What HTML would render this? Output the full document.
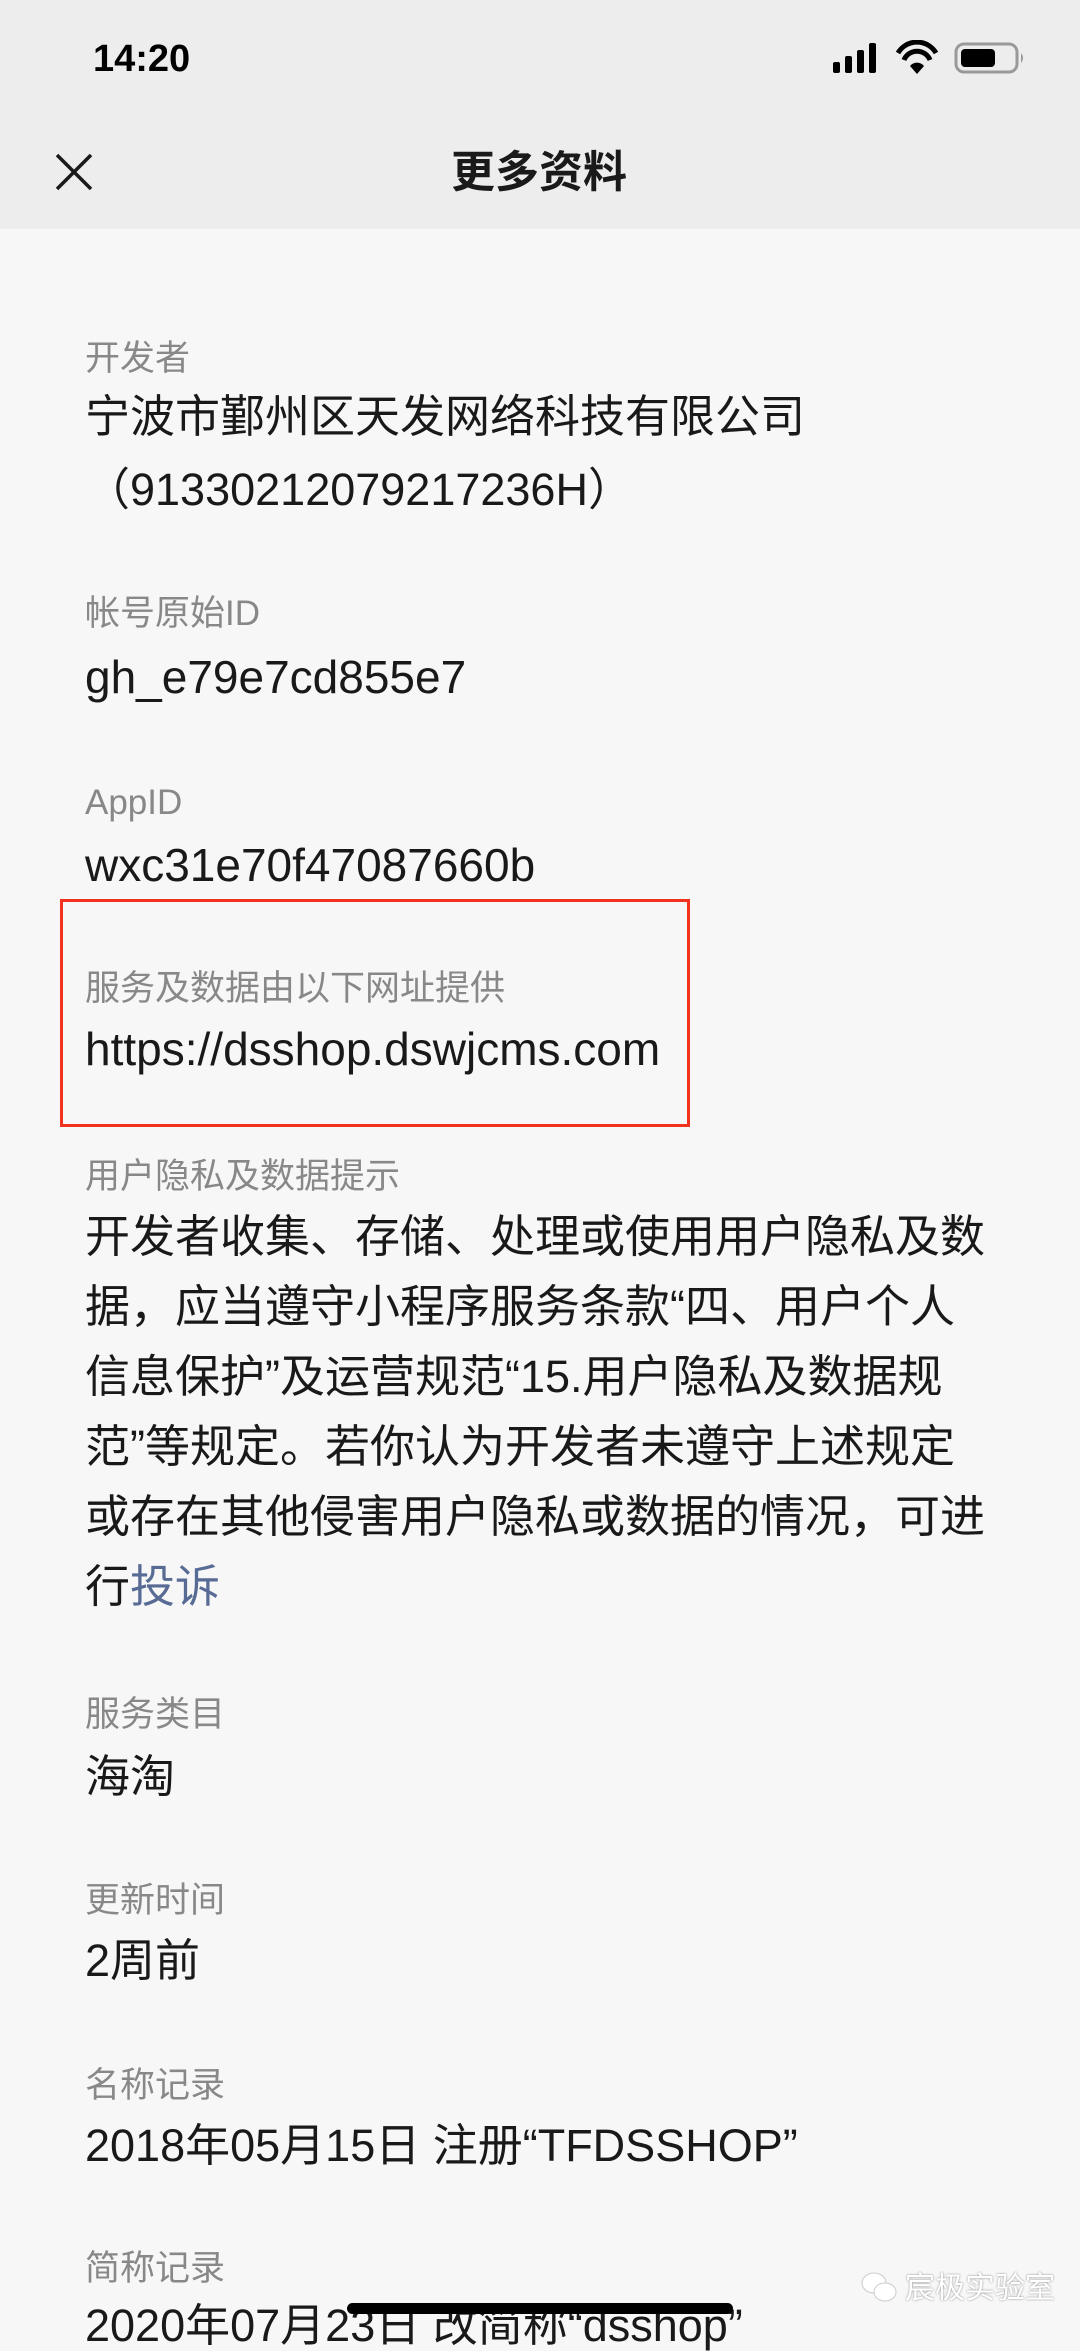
<!DOCTYPE html>
<html><head><meta charset="utf-8"><style>
body{margin:0;width:1080px;height:2337px;background:#f7f7f7;overflow:hidden;position:relative;font-family:"Liberation Sans","Noto Sans CJK SC",sans-serif;color:#1a1a1a}
.hdr{position:absolute;left:0;top:0;width:1080px;height:229px;background:#ededed}
.t{position:absolute;left:85px;white-space:nowrap;line-height:1}
.l{font-size:35px;color:#888}
.v{font-size:45px;color:#191919}
.w{font-size:46px}
</style></head><body>
<div class="hdr"></div>
<div class="t" style="left:93px;top:40px;font-size:38px;font-weight:bold;color:#000">14:20</div>
<svg style="position:absolute;left:830px;top:40px" width="200" height="40" viewBox="0 0 200 40">
<rect x="3" y="22" width="7" height="11" rx="2" fill="#000"/>
<rect x="15" y="16" width="7" height="17" rx="2" fill="#000"/>
<rect x="27" y="10" width="7" height="23" rx="2" fill="#000"/>
<rect x="39" y="3" width="7" height="30" rx="2" fill="#000"/>
<path d="M68 13 A22 22 0 0 1 106 13" stroke="#000" stroke-width="5" fill="none"/>
<path d="M74 20 A14 14 0 0 1 100 20" stroke="#000" stroke-width="5" fill="none"/>
<path d="M80 26 L87 34 L94 26 A9 9 0 0 0 80 26Z" fill="#000"/>
<rect x="126" y="4" width="61" height="28" rx="8" fill="none" stroke="#999" stroke-width="3"/>
<rect x="131" y="9" width="34" height="18" rx="4" fill="#000"/>
<path d="M191 13 q4 5 0 10z" fill="#999"/>
</svg>
<svg style="position:absolute;left:55px;top:153px" width="38" height="38" viewBox="0 0 38 38"><path d="M2 2L36 36M36 2L2 36" stroke="#1a1a1a" stroke-width="3.5"/></svg>
<div class="t" style="left:451px;top:151px;font-size:44px;font-weight:bold;color:#1a1a1a">更多资料</div>

<div class="t l" style="top:341px">开发者</div>
<div class="t v" style="top:394px">宁波市鄞州区天发网络科技有限公司</div>
<div class="t v" style="top:467px">（91330212079217236H）</div>
<div class="t l" style="top:596px">帐号原始ID</div>
<div class="t v w" style="top:654px">gh_e79e7cd855e7</div>
<div class="t l" style="top:785px">AppID</div>
<div class="t v w" style="top:842px">wxc31e70f47087660b</div>
<div style="position:absolute;left:60px;top:899px;width:624px;height:222px;border:3px solid #f2321c"></div>
<div class="t l" style="top:971px">服务及数据由以下网址提供</div>
<div class="t v w" style="top:1026px">https://dsshop.dswjcms.com</div>
<div class="t l" style="top:1159px">用户隐私及数据提示</div>
<div class="t v" style="top:1214px">开发者收集、存储、处理或使用用户隐私及数</div>
<div class="t v" style="top:1284px">据，应当遵守小程序服务条款“四、用户个人</div>
<div class="t v" style="top:1354px">信息保护”及运营规范“15.用户隐私及数据规</div>
<div class="t v" style="top:1424px">范”等规定。若你认为开发者未遵守上述规定</div>
<div class="t v" style="top:1494px">或存在其他侵害用户隐私或数据的情况，可进</div>
<div class="t v" style="top:1564px">行<span style="color:#576b95">投诉</span></div>
<div class="t l" style="top:1697px">服务类目</div>
<div class="t v" style="top:1754px">海淘</div>
<div class="t l" style="top:1883px">更新时间</div>
<div class="t v" style="top:1938px">2周前</div>
<div class="t l" style="top:2068px">名称记录</div>
<div class="t v" style="top:2123px">2018年05月15日 注册“TFDSSHOP”</div>
<div class="t l" style="top:2251px">简称记录</div>
<div class="t v" style="top:2303px">2020年07月23日 改简称“dsshop”</div>
<div style="position:absolute;left:347px;top:2303px;width:386px;height:11px;border-radius:6px;background:#000"></div>
<svg style="position:absolute;left:860px;top:2270px" width="40" height="36" viewBox="0 0 40 36"><ellipse cx="14" cy="13" rx="12" ry="10" fill="#fff" stroke="#ccc"/><ellipse cx="25" cy="22" rx="11" ry="9" fill="#fff" stroke="#ccc"/></svg>
<div class="t" style="left:905px;top:2274px;font-size:30px;color:#fff;text-shadow:0 0 2px #888">宸极实验室</div>
</body></html>
